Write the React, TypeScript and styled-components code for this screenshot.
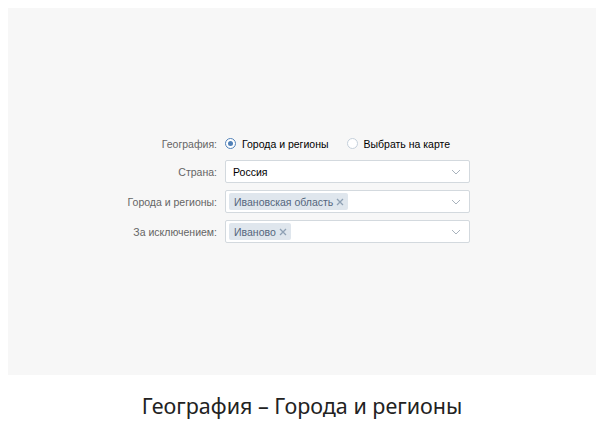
import React from "react";
import styled, { createGlobalStyle } from "styled-components";

const Global = createGlobalStyle`
  html, body { margin: 0; padding: 0; background: #ffffff; }
  body { margin: 8px; font-family: "Liberation Sans", Arial, sans-serif; }
`;

const Page = styled.div`
  display: flex;
  flex-direction: column;
`;

const Panel = styled.div`
  height: 367px;
  background: #f7f7f7;
  display: flex;
  align-items: center;
  padding-left: 109px;
  padding-bottom: 6px;
  box-sizing: border-box;
`;

const Form = styled.div`
  display: grid;
  grid-template-columns: 100px 245px;
  grid-template-rows: 19px 23px 23px 23px;
  column-gap: 8px;
  row-gap: 7px;
  align-items: center;
`;

const Label = styled.div`
  text-align: right;
  font-size: 10.5px;
  color: #656565;
  white-space: nowrap;
`;

const RadioGroup = styled.div`
  display: flex;
  align-items: center;
  gap: 18px;
  padding-left: 0;
`;

const RadioItem = styled.label`
  display: flex;
  align-items: center;
  gap: 6px;
  font-size: 10.5px;
  color: #000;
`;

const RadioCircle = styled.span<{ $checked?: boolean }>`
  width: 11px;
  height: 11px;
  box-sizing: border-box;
  border-radius: 50%;
  border: 1px solid ${(p) => (p.$checked ? "#5181b8" : "#c5d0db")};
  background: #fff;
  display: flex;
  align-items: center;
  justify-content: center;
  &::after {
    content: "";
    width: 5px;
    height: 5px;
    border-radius: 50%;
    background: ${(p) => (p.$checked ? "#5181b8" : "transparent")};
  }
`;

const Select = styled.div`
  height: 23px;
  box-sizing: border-box;
  background: #fff;
  border: 1px solid #d3d9de;
  border-radius: 2px;
  display: flex;
  align-items: center;
  padding: 0 8px 0 3px;
`;

const Value = styled.span`
  font-size: 10.5px;
  color: #000;
  padding-left: 4px;
  flex: 1;
`;

const Tokens = styled.div`
  flex: 1;
  display: flex;
  gap: 4px;
`;

const Token = styled.span`
  display: inline-flex;
  align-items: center;
  gap: 3px;
  height: 17px;
  padding: 0 4px 0 5px;
  background: #dfe6ed;
  border-radius: 2px;
  font-size: 10.5px;
  color: #55677d;
`;

const Caption = styled.div`
  height: 61px;
  display: flex;
  align-items: center;
  justify-content: center;
  font-family: "Noto Sans", sans-serif;
  font-size: 21.5px;
  color: #222;
`;

const Cross = () => (
  <svg width="8" height="8" viewBox="0 0 8 8">
    <path d="M1 1L7 7M7 1L1 7" stroke="#8fa1b4" strokeWidth="1.3" />
  </svg>
);

const Chevron = () => (
  <svg width="10" height="6" viewBox="0 0 10 6">
    <path d="M1 1L5 5L9 1" fill="none" stroke="#a9b3bd" strokeWidth="1" />
  </svg>
);

export default function App() {
  return (
    <Page>
      <Global />
      <Panel>
        <Form>
          <Label>География:</Label>
          <RadioGroup>
            <RadioItem>
              <RadioCircle $checked />
              Города и регионы
            </RadioItem>
            <RadioItem>
              <RadioCircle />
              Выбрать на карте
            </RadioItem>
          </RadioGroup>

          <Label>Страна:</Label>
          <Select>
            <Value>Россия</Value>
            <Chevron />
          </Select>

          <Label>Города и регионы:</Label>
          <Select>
            <Tokens>
              <Token>
                Ивановская область <Cross />
              </Token>
            </Tokens>
            <Chevron />
          </Select>

          <Label>За исключением:</Label>
          <Select>
            <Tokens>
              <Token>
                Иваново <Cross />
              </Token>
            </Tokens>
            <Chevron />
          </Select>
        </Form>
      </Panel>
      <Caption>География – Города и регионы</Caption>
    </Page>
  );
}
